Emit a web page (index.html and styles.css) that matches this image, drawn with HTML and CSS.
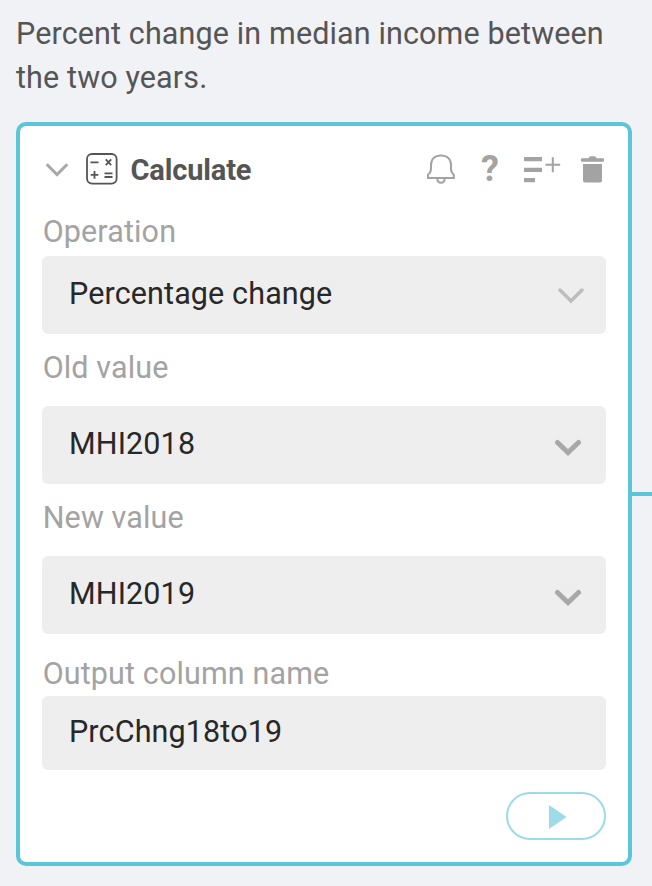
FILE: index.html
```html
<!DOCTYPE html>
<html lang="en">
<head>
<meta charset="utf-8">
<title>Calculate</title>
<link rel="stylesheet" href="styles.css">
</head>
<body>
<p class="note">Percent change in median income between the two years.</p>
<section class="card">
  <header class="card-header">
    <svg class="collapse" width="24" height="16" viewBox="0 0 24 16"><path d="M1.7 2.2 12 12.6 22.3 2.2"/></svg>
    <svg class="calc" width="32" height="32" viewBox="0 0 32 32"><rect x="1" y="1" width="29.6" height="29.6" rx="5"/><path d="M4.5 9.3h8M19.8 6.3l5.4 5.8M25.2 6.3l-5.4 5.8M4.7 21.9h7.6M8.5 18.1v7.6M18.5 20.4h8M18.5 24h8"/></svg>
    <h1 class="title">Calculate</h1>
    <div class="tools">
      <svg class="bell" width="30" height="32" viewBox="0 0 30 32"><path d="M5 15.5V12C5 6 9 2.400 15 2.400S25 6 25 12v3.500c0 3 .7 4.500 2.800 6.200V25H2v-3.300c2.200-1.700 3-3.200 3-6.200ZM11.200 25.300c.3 3 1.700 4.400 3.800 4.400s3.500-1.400 3.800-4.400"/></svg>
      <span class="help">?</span>
      <svg class="add-note" width="38" height="28" viewBox="0 0 38 28"><path class="bars" d="M0 2h18v4.300H0zM0 12.700h18V17H0zM0 23h11v4.300H0z"/><path class="plus" d="M21.500 9.700h14.700M28.800 2.200v15"/></svg>
      <svg class="trash" width="23" height="28" viewBox="0 0 23 28"><path d="M1 3.300h6.500q.5-2.100 2.200-2.100h3.600q1.700 0 2.200 2.100H22q1 0 1 1v1.500q0 1-1 1H1q-1 0-1-1V4.300q0-1 1-1ZM2 9h19v16.500q0 2-2 2H4q-2 0-2-2Z"/></svg>
    </div>
  </header>
  <div class="field operation">
    <div class="label">Operation</div>
    <div class="control select"><span>Percentage change</span><svg class="arrow thin" width="28" height="18" viewBox="0 0 28 18"><path d="M3 3 14 14 25 3"/></svg></div>
  </div>
  <div class="field value">
    <div class="label">Old value</div>
    <div class="control select"><span>MHI2018</span><svg class="arrow" width="28" height="18" viewBox="0 0 28 18"><path d="M3.500 3.500 14 13.500 24.500 3.500"/></svg></div>
  </div>
  <div class="field value">
    <div class="label">New value</div>
    <div class="control select"><span>MHI2019</span><svg class="arrow" width="28" height="18" viewBox="0 0 28 18"><path d="M3.500 3.500 14 13.500 24.500 3.500"/></svg></div>
  </div>
  <div class="field output">
    <div class="label">Output column name</div>
    <div class="control">PrcChng18to19</div>
  </div>
  <div class="run"><svg width="18" height="24" viewBox="0 0 18 24"><path d="M0 0 17.500 12 0 24Z"/></svg></div>
  <div class="connector"></div>
</section>
</body>
</html>
```
FILE: styles.css
```css
* { box-sizing: border-box; }
body {
  margin: 0;
  height: 886px;
  overflow: hidden;
  padding: 12px 20px 0 16px;
  background: #f1f2f6;
  font: 30.500px/44px Roboto, sans-serif;
  letter-spacing: 0.130px;
}
svg { display: block; flex: none; fill: none; }
.note { margin: 0 0 22px; color: #555; }
.card {
  position: relative;
  height: 744px;
  padding: 0 22px;
  border: 4px solid #5bc5d9;
  border-radius: 10px;
  background: #fff;
}
.card-header { display: flex; align-items: center; height: 88px; }
.collapse { margin: 0 17px 0 3px; stroke: #a8a8a8; stroke-width: 3; }
.calc { stroke: #555; stroke-width: 1.800; margin-top: -3px; }
.title {
  margin: 0 0 0 12.500px;
  font-size: 29px;
  font-weight: 700;
  letter-spacing: -0.150px;
  color: #555;
}
.tools { display: flex; align-items: center; margin: -3px 0 0 auto; }
.bell { stroke: #a3a3a3; stroke-width: 2; }
.help { width: 20px; margin: 0 24px; text-align: center; font-size: 36px; font-weight: 700; color: #a3a3a3; }
.add-note .bars { fill: #a3a3a3; }
.add-note .plus { stroke: #a3a3a3; stroke-width: 2; }
.trash { margin: 0 2px 0 19px; fill: #a3a3a3; }
.label { height: 42px; padding-left: 0.700px; line-height: 36px; color: #a3a3a3; }
.control {
  height: 74px;
  padding-left: 27px;
  border-radius: 6px;
  background: #eee;
  color: #282828;
  line-height: 72px;
}
.select {
  display: flex;
  justify-content: space-between;
  height: 78px;
  padding-right: 24px;
  line-height: 76px;
}
.arrow { margin-top: 32.500px; stroke: #a8a8a8; stroke-width: 5; stroke-linecap: round; }
.arrow.thin { margin: 31px -3px 0 0; stroke: #bdbdbd; stroke-width: 3.500; }
.operation { margin-bottom: 16px; }
.value { margin-bottom: 16px; }
.value .label { height: 56px; }
.output { margin-top: 22px; }
.output .label { height: 40px; }
.run {
  display: flex;
  align-items: center;
  width: 100px;
  height: 48px;
  margin: 22px 0 0 auto;
  padding: 2px 0 0 41px;
  border: 2px solid #9edbe8;
  border-radius: 24px;
}
.run svg { fill: #9edbe8; }
.connector { position: absolute; left: 100%; top: 366px; width: 24px; height: 4px; background: #5bc5d9; }
```
